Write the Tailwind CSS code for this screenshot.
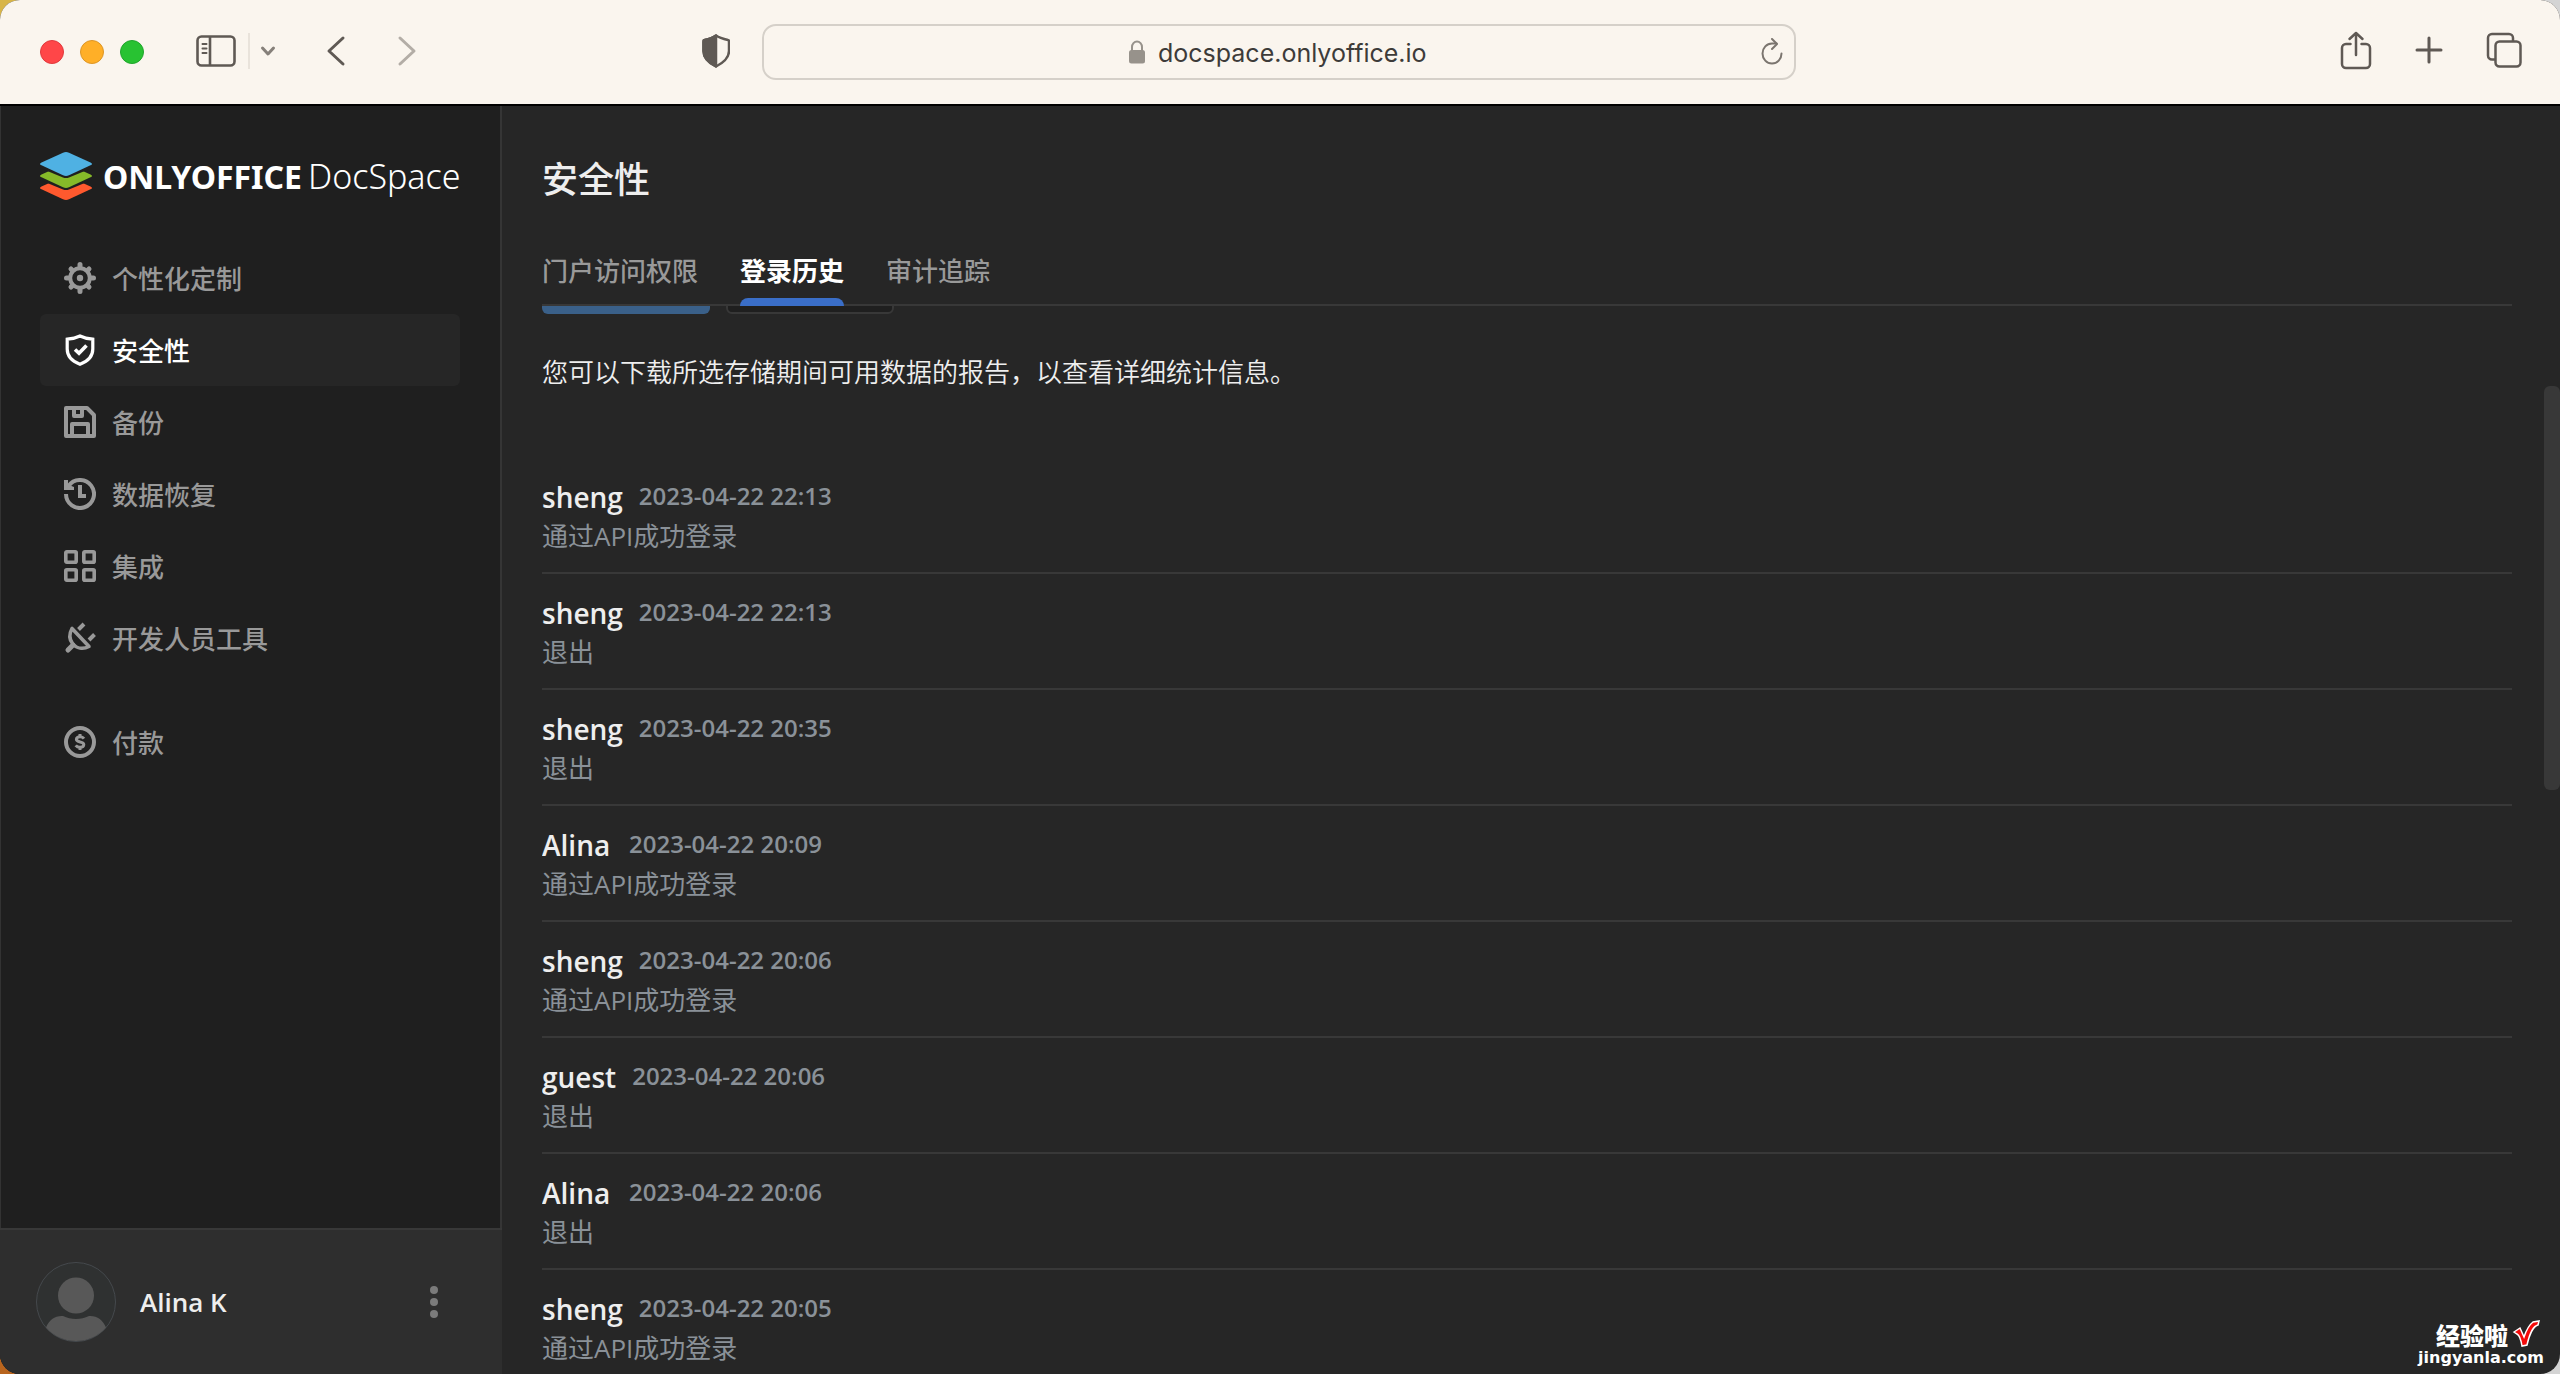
<!DOCTYPE html>
<html lang="zh-CN">
<head>
<meta charset="utf-8">
<title>ONLYOFFICE DocSpace</title>
<script src="https://cdn.jsdelivr.net/npm/@tailwindcss/browser@4"></script>
</head>
<body class="h-screen overflow-hidden bg-[conic-gradient(#d4d4d4_50%,#b8651e_50%_75%,#d8b548_75%)] font-['Open_Sans','Noto_Sans_CJK_SC',sans-serif]">
<div class="relative flex h-screen flex-col overflow-hidden rounded-[20px] bg-[#262626]">

  <!-- Browser toolbar -->
  <header class="flex h-[106px] shrink-0 items-center border-b-2 border-black bg-[#faf5ee] px-9 text-[#5f5954]">
    <div class="flex flex-1 items-center">
      <div class="ml-1 flex gap-4">
        <button aria-label="关闭" class="size-6 rounded-full border border-[#e0393c] bg-[#ff4648]"></button>
        <button aria-label="最小化" class="size-6 rounded-full border border-[#dd9626] bg-[#ffaf27]"></button>
        <button aria-label="全屏" class="size-6 rounded-full border border-[#20a52c] bg-[#28c232]"></button>
      </div>
      <div class="flex flex-1 items-center pb-0.5">
        <button aria-label="边栏" class="ml-[52px]">
          <svg class="h-8 w-10" viewBox="0 0 40 32" fill="none" stroke="currentColor" stroke-width="2.600"><rect x="1.500" y="1.500" width="37" height="29" rx="4"/><path d="M14 2v28"/><path d="M6.500 9h4M6.500 13.500h4M6.500 18h4" stroke-width="2" stroke-linecap="round"/></svg>
        </button>
        <span class="ml-3 h-9 w-0.5 bg-[#e9e3db]"></span>
        <button aria-label="标签页组" class="ml-2.5">
          <svg class="h-4 w-4" viewBox="0 0 16 16" fill="none" stroke="#86807a" stroke-width="3" stroke-linecap="round" stroke-linejoin="round"><path d="M2.500 5l5.500 6 5.500-6"/></svg>
        </button>
        <button aria-label="后退" class="ml-[50px]">
          <svg class="h-8 w-5" viewBox="0 0 20 32" fill="none" stroke="currentColor" stroke-width="3" stroke-linecap="round" stroke-linejoin="round"><path d="M17 3L3 16l14 13"/></svg>
        </button>
        <button aria-label="前进" class="ml-[51px] text-[#b3ada6]">
          <svg class="h-8 w-5" viewBox="0 0 20 32" fill="none" stroke="currentColor" stroke-width="3" stroke-linecap="round" stroke-linejoin="round"><path d="M3 3l14 13L3 29"/></svg>
        </button>
        <button aria-label="隐私报告" class="mr-8 ml-auto">
          <svg class="h-9 w-7" viewBox="0 0 28 36" fill="none" stroke="currentColor" stroke-width="2.500" stroke-linejoin="round"><path d="M14 2.500c3.500 2.500 7.500 3.500 12 4.500 1 0 1 1 1 2v9c0 7.500-6 12-13 15.500C7 30 1.500 25.500 1.500 18V9c0-1 0-2 1-2C7 6 10.500 5 14 2.500z"/><path d="M14 2.500C10.500 5 7 6 2.500 7c-1 0-1 1-1 2v9c0 7.500 5.500 12 12.500 15.500z" fill="currentColor"/></svg>
        </button>
      </div>
    </div>
    <div class="relative flex h-14 w-[1034px] items-center justify-center rounded-[14px] border-2 border-[#d5d0c9] pl-3">
      <svg class="mr-3 h-6 w-[18px]" viewBox="0 0 18 24"><path d="M4 11V7a5 5.500 0 0 1 10 0v4" fill="none" stroke="#97928b" stroke-width="2"/><rect x="1" y="10" width="16" height="13.500" rx="2.500" fill="#97928b"/></svg>
      <label for="url" class="sr-only">网址</label>
      <input id="url" type="text" value="docspace.onlyoffice.io" class="h-11 w-[284px] bg-transparent pt-0.5 font-['Inter','Noto_Sans_CJK_SC',sans-serif] text-[25px] leading-10 text-[#3d3b39] outline-none">
      <button aria-label="重新载入" class="absolute top-3 right-2.5">
        <svg class="h-7 w-6" viewBox="0 0 24 28" fill="none" stroke="#7b756f" stroke-width="2" stroke-linecap="round" stroke-linejoin="round"><path d="M21.500 15.500A9.500 10 0 1 1 12 5.500h4.500"/><path d="M12 1l5 5-5 5"/></svg>
      </button>
    </div>
    <div class="flex flex-1 items-center justify-end gap-[43px] pr-0.5 pb-1">
      <button aria-label="共享">
        <svg class="h-10 w-8" viewBox="0 0 32 40" fill="none" stroke="currentColor" stroke-width="2.500" stroke-linecap="round" stroke-linejoin="round"><path d="M10.500 14H6a4 4 0 0 0-4 4v16a4 4 0 0 0 4 4h20a4 4 0 0 0 4-4V18a4 4 0 0 0-4-4h-4.500M16 25V3M9.500 9L16 3l6.500 6"/></svg>
      </button>
      <button aria-label="新标签页">
        <svg class="h-7 w-7" viewBox="0 0 28 28" fill="none" stroke="currentColor" stroke-width="3" stroke-linecap="round"><path d="M14 2v24M2 14h24"/></svg>
      </button>
      <button aria-label="标签页概览">
        <svg class="h-9 w-9" viewBox="0 0 36 36" fill="none" stroke="currentColor" stroke-width="2.500"><rect x="9.500" y="9.500" width="25" height="25" rx="4"/><path d="M9.500 27.500H6a4 4 0 0 1-4-4V6a4 4 0 0 1 4-4h17a4 4 0 0 1 4 4v3.500"/></svg>
      </button>
    </div>
  </header>

  <div class="flex min-h-0 flex-1">
    <!-- Sidebar -->
    <aside class="flex w-[502px] shrink-0 flex-col border-r-2 border-[#353535] bg-[#1f1f1f] shadow-[inset_1px_0_#333]">
      <a href="#" class="mt-[46px] ml-10 flex h-12 items-center text-white">
        <svg class="h-12 w-[52px] shrink-0" viewBox="0 0 52 48">
          <path d="M1.500 34.500L26 23.500l24.500 11c2 1 2 1.800 0 2.800L29 47.200c-2 .9-4 .9-6 0L1.500 37.300c-2-1-2-1.800 0-2.800z" fill="#ff592e"/>
          <path d="M-1 24v6l24 10c2 .8 4 .8 6 0l24-10v-6z" fill="#1f1f1f" transform="translate(0 -2.500)"/>
          <path d="M1.500 22.500L26 11.500l24.500 11c2 1 2 1.800 0 2.800L29 35.200c-2 .9-4 .9-6 0L1.500 25.300c-2-1-2-1.800 0-2.800z" fill="#86b929"/>
          <path d="M-1 12v6l24 10c2 .8 4 .8 6 0l24-10v-6z" fill="#1f1f1f" transform="translate(0 -2.500)"/>
          <path d="M1.500 10.500L23 .7c2-.9 4-.9 6 0l21.500 9.800c2 1 2 1.800 0 2.800L29 23.200c-2 .9-4 .9-6 0L1.500 13.300c-2-1-2-1.800 0-2.800z" fill="#4fb1e3"/>
        </svg>
        <span class="ml-[11px] flex items-baseline font-['Noto_Sans','Open_Sans',sans-serif] leading-10 whitespace-nowrap"><span class="text-[32px] font-bold">ONLYOFFICE</span><span class="ml-1.5 text-[34px] font-light">DocSpace</span></span>
      </a>
      <nav class="mx-10 mt-[42px] flex flex-col text-[26px] font-medium text-[#999]">
        <a href="#" class="flex h-[72px] items-center gap-4 px-6">
          <svg class="size-8" viewBox="0 0 32 32" fill="none" stroke="currentColor"><circle cx="16" cy="16" r="9.800" stroke-width="4"/><circle cx="16" cy="16" r="3.200" fill="currentColor" stroke="none"/><g stroke-width="5" stroke-linecap="round"><path d="M16 2.500V4M16 28v1.500M2.500 16H4M28 16h1.500M7 7l1 1M24 24l1 1M7 25l1-1M24 8l1-1"/></g></svg>
          <span class="pt-0.5">个性化定制</span></a>
        <a href="#" aria-current="page" class="flex h-[72px] items-center gap-4 rounded-md bg-[#262626] px-6 text-white">
          <svg class="size-8" viewBox="0 0 32 32" fill="none" stroke="currentColor" stroke-width="3.600"><path d="M16 2c4 2 8 2.800 12.800 3.200V15c0 8-5.300 12.500-12.800 15.200C8.500 27.500 3.200 23 3.200 15V5.200C8 4.800 12 4 16 2z" stroke-width="3.200"/><path d="M11 15.500l4 3.800L22.500 11.500"/></svg>
          <span class="pt-0.5">安全性</span></a>
        <a href="#" class="flex h-[72px] items-center gap-4 px-6">
          <svg class="size-8" viewBox="0 0 32 32" fill="none" stroke="currentColor" stroke-width="4" stroke-linejoin="round"><path d="M2 2h21l7 7v21H2z"/><path d="M10 2v8h8V2M8 30V18h16v12" /></svg>
          <span class="pt-0.5">备份</span></a>
        <a href="#" class="flex h-[72px] items-center gap-4 px-6">
          <svg class="size-8" viewBox="0 0 32 32" fill="none" stroke="currentColor" stroke-width="4"><path d="M2 16A14 14 0 1 0 4.500 8"/><path d="M0 2h4v4.500L7.500 8 10 9v3H0z" fill="currentColor" stroke="none"/><path d="M16 7v11h6"/></svg>
          <span class="pt-0.5">数据恢复</span></a>
        <a href="#" class="flex h-[72px] items-center gap-4 px-6">
          <svg class="size-8" viewBox="0 0 32 32" fill="none" stroke="currentColor" stroke-width="3.600"><rect x="1.800" y="1.800" width="10.400" height="10.400" rx="1"/><rect x="19.800" y="1.800" width="10.400" height="10.400" rx="1"/><rect x="1.800" y="19.800" width="10.400" height="10.400" rx="1"/><rect x="19.800" y="19.800" width="10.400" height="10.400" rx="1"/></svg>
          <span class="pt-0.5">集成</span></a>
        <a href="#" class="flex h-[72px] items-center gap-4 px-6">
          <svg class="size-8" viewBox="0 0 32 32" fill="none" stroke="currentColor" stroke-width="3.600" stroke-linejoin="round"><path d="M8 6.500C5 12 5 17 8.500 21.500 12.500 26.500 19 27.500 25 24.500z"/><path d="M9 23l-5 5" stroke-width="5" stroke-linecap="round"/><path d="M14.500 7.500l5.500-5.500M25 18l5.500-5.500" stroke-linecap="butt" stroke-width="4"/></svg>
          <span class="pt-0.5">开发人员工具</span></a>
        <a href="#" class="mt-8 flex h-[72px] items-center gap-4 px-6">
          <svg class="size-8" viewBox="0 0 32 32" fill="none" stroke="currentColor" stroke-width="4"><circle cx="16" cy="16" r="14"/><path d="M20 12.700c-1-1.400-2.300-1.900-4-1.900-2.200 0-3.600.9-3.600 2.500 0 3.600 7.400 1.700 7.400 5.300 0 1.700-1.500 2.700-3.800 2.700-1.900 0-3.300-.7-4.300-2" stroke-width="3"/><path d="M16 8v3M16 21v3" stroke-width="3"/></svg>
          <span class="pt-0.5">付款</span></a>
      </nav>
      <div class="mt-auto -mr-0.5 flex h-[146px] items-center border-t-2 border-[#383838] bg-[#2e2e2e] pr-16 pl-9">
        <svg class="size-20" viewBox="0 0 80 80"><circle cx="40" cy="40" r="39.500" fill="#2f3131" stroke="#45494d"/><circle cx="40" cy="33.500" r="18" fill="#585858"/><path d="M10 65.500C13 58 19 53.500 27 54c8 4 18 4 26 0 8-.5 14 4 17 11.500a40 40 0 0 1-60 0z" fill="#585858"/></svg>
        <span class="ml-6 text-[26px] leading-9 font-semibold text-[#eee]">Alina K</span>
        <button aria-label="更多" class="ml-auto">
          <svg class="h-8 w-2" viewBox="0 0 8 32" fill="#7b7b7b"><circle cx="4" cy="4" r="4"/><circle cx="4" cy="16" r="4"/><circle cx="4" cy="28" r="4"/></svg>
        </button>
      </div>
    </aside>

    <!-- Page -->
    <main class="flex min-w-0 flex-1 flex-col pr-12 pl-10">
      <h1 class="mt-[49px] text-4xl leading-[50px] font-medium text-[#eee]">安全性</h1>
      <nav class="mt-12 flex h-[53px] shrink-0 gap-[42px] border-b-2 border-[#383838] text-[26px] leading-9 font-medium text-[#999]">
        <a href="#">门户访问权限</a>
        <a href="#" aria-current="page" class="relative font-bold text-white">登录历史<span class="absolute inset-x-0 -bottom-0.5 h-2 rounded-t-lg bg-[#3a6ec8]"></span></a>
        <a href="#">审计追踪</a>
      </nav>
      <div class="min-h-0 flex-1 overflow-hidden">
        <div class="-mt-14 flex gap-4">
          <button aria-label="保存" class="h-16 w-[168px] rounded-md bg-[#3a6089]"></button>
          <button aria-label="取消" class="h-16 w-[168px] rounded-md border-2 border-[#383838] bg-[#1f1f1f]"></button>
        </div>
        <p class="mt-[38px] text-[26px] leading-10 font-[350] text-[#eee]">您可以下载所选存储期间可用数据的报告，以查看详细统计信息。</p>
        <ul class="mt-[66px] text-[26px] text-[#8a9198]">
          <li class="h-[116px] border-b-2 border-[#383838] pt-[21px]">
            <div class="flex gap-4 leading-9"><a href="#" class="min-w-[71px] text-[28px] font-semibold text-[#eee]">sheng</a><time class="text-2xl leading-[34px] font-semibold">2023-04-22 22:13</time></div>
            <p class="leading-[43px]">通过API成功登录</p>
          </li>
          <li class="h-[116px] border-b-2 border-[#383838] pt-[21px]">
            <div class="flex gap-4 leading-9"><a href="#" class="min-w-[71px] text-[28px] font-semibold text-[#eee]">sheng</a><time class="text-2xl leading-[34px] font-semibold">2023-04-22 22:13</time></div>
            <p class="leading-[43px]">退出</p>
          </li>
          <li class="h-[116px] border-b-2 border-[#383838] pt-[21px]">
            <div class="flex gap-4 leading-9"><a href="#" class="min-w-[71px] text-[28px] font-semibold text-[#eee]">sheng</a><time class="text-2xl leading-[34px] font-semibold">2023-04-22 20:35</time></div>
            <p class="leading-[43px]">退出</p>
          </li>
          <li class="h-[116px] border-b-2 border-[#383838] pt-[21px]">
            <div class="flex gap-4 leading-9"><a href="#" class="min-w-[71px] text-[28px] font-semibold text-[#eee]">Alina</a><time class="text-2xl leading-[34px] font-semibold">2023-04-22 20:09</time></div>
            <p class="leading-[43px]">通过API成功登录</p>
          </li>
          <li class="h-[116px] border-b-2 border-[#383838] pt-[21px]">
            <div class="flex gap-4 leading-9"><a href="#" class="min-w-[71px] text-[28px] font-semibold text-[#eee]">sheng</a><time class="text-2xl leading-[34px] font-semibold">2023-04-22 20:06</time></div>
            <p class="leading-[43px]">通过API成功登录</p>
          </li>
          <li class="h-[116px] border-b-2 border-[#383838] pt-[21px]">
            <div class="flex gap-4 leading-9"><a href="#" class="min-w-[71px] text-[28px] font-semibold text-[#eee]">guest</a><time class="text-2xl leading-[34px] font-semibold">2023-04-22 20:06</time></div>
            <p class="leading-[43px]">退出</p>
          </li>
          <li class="h-[116px] border-b-2 border-[#383838] pt-[21px]">
            <div class="flex gap-4 leading-9"><a href="#" class="min-w-[71px] text-[28px] font-semibold text-[#eee]">Alina</a><time class="text-2xl leading-[34px] font-semibold">2023-04-22 20:06</time></div>
            <p class="leading-[43px]">退出</p>
          </li>
          <li class="h-[116px] border-b-2 border-[#383838] pt-[21px]">
            <div class="flex gap-4 leading-9"><a href="#" class="min-w-[71px] text-[28px] font-semibold text-[#eee]">sheng</a><time class="text-2xl leading-[34px] font-semibold">2023-04-22 20:05</time></div>
            <p class="leading-[43px]">通过API成功登录</p>
          </li>
        </ul>
      </div>
    </main>
  </div>

  <!-- Scrollbar thumb -->
  <div class="absolute top-[386px] right-0 h-[404px] w-4 rounded-md bg-[#383838]"></div>

  <!-- Site watermark -->
  <div class="absolute right-4 bottom-1.5 flex flex-col items-end text-white">
    <div class="flex items-center gap-1 pr-1 text-2xl leading-6 font-black"><span class="pt-1">经验啦</span>
      <svg class="h-7 w-7" viewBox="0 0 28 28"><path d="M2 12l6-4 4 9c2-6 5-12 9-15l6-1-1 4c-5 1-9 11-11 20l-5 1c-1-6-3-11-5-12z" fill="#f40b0b" stroke="#fff" stroke-width="1.500"/></svg>
    </div>
    <span class="font-['DejaVu_Sans',sans-serif] text-base leading-5 font-bold">jingyanla.com</span>
  </div>
</div>
</body>
</html>
